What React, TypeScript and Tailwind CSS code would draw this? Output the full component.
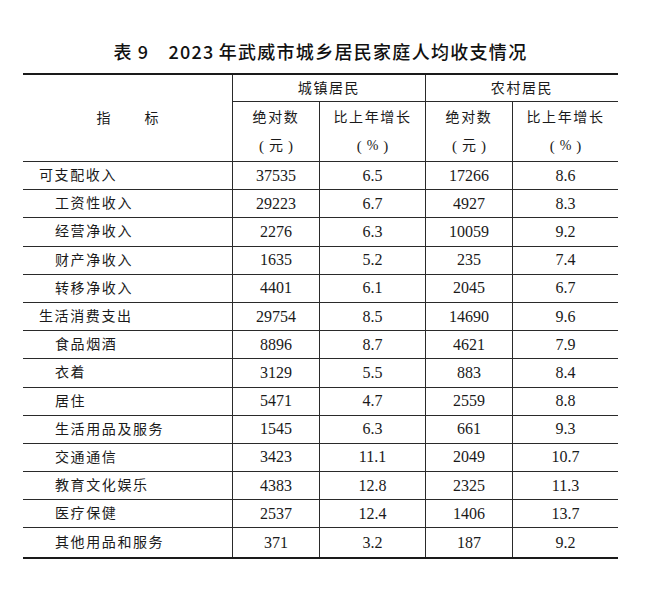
import React from "react";

type Row = { label: string; v: string[]; sub: boolean };

const rows: Row[] = [
  { label: "可支配收入", v: ["37535", "6.5", "17266", "8.6"], sub: false },
  { label: "工资性收入", v: ["29223", "6.7", "4927", "8.3"], sub: true },
  { label: "经营净收入", v: ["2276", "6.3", "10059", "9.2"], sub: true },
  { label: "财产净收入", v: ["1635", "5.2", "235", "7.4"], sub: true },
  { label: "转移净收入", v: ["4401", "6.1", "2045", "6.7"], sub: true },
  { label: "生活消费支出", v: ["29754", "8.5", "14690", "9.6"], sub: false },
  { label: "食品烟酒", v: ["8896", "8.7", "4621", "7.9"], sub: true },
  { label: "衣着", v: ["3129", "5.5", "883", "8.4"], sub: true },
  { label: "居住", v: ["5471", "4.7", "2559", "8.8"], sub: true },
  { label: "生活用品及服务", v: ["1545", "6.3", "661", "9.3"], sub: true },
  { label: "交通通信", v: ["3423", "11.1", "2049", "10.7"], sub: true },
  { label: "教育文化娱乐", v: ["4383", "12.8", "2325", "11.3"], sub: true },
  { label: "医疗保健", v: ["2537", "12.4", "1406", "13.7"], sub: true },
  { label: "其他用品和服务", v: ["371", "3.2", "187", "9.2"], sub: true },
];

const serif = "font-['Liberation_Serif','Noto_Sans_CJK_SC',serif]";

function Unit({ u }: { u: string }) {
  return (
    <span className="flex items-center gap-[5px] tracking-normal">
      <span className="text-[15px]">(</span>
      <span>{u}</span>
      <span className="text-[15px]">)</span>
    </span>
  );
}

export default function App() {
  return (
    <div className="w-[650px] h-[597px] bg-white text-[#1a1a1a] overflow-hidden">
      <div className="ml-[23px] w-[595px] pt-[39px]">
        <div className="flex justify-center items-center h-[24px] leading-[24px] font-['Noto_Sans_CJK_SC',sans-serif] font-medium text-[18px] tracking-[1.3px] text-[#111]">
          <span>表</span>
          <span className="ml-[5px]">9</span>
          <span className="ml-[19px]">2023</span>
          <span className="ml-[4px]">年武威市城乡居民家庭人均收支情况</span>
        </div>
        <div
          className={`mt-[10px] grid grid-cols-[209px_87px_106px_87px_106px] grid-rows-[27px_60px_repeat(14,28.2px)] border-t-2 border-b-2 border-[#1a1a1a] ${serif}`}
        >
          <div className="row-span-2 border-b border-[#2a2a2a] flex items-center justify-center gap-[34px] text-[14px]">
            <span>指</span>
            <span>标</span>
          </div>
          <div className="col-span-2 border-l border-b border-[#2a2a2a] flex items-center justify-center text-[14px] tracking-[1.6px]">
            城镇居民
          </div>
          <div className="col-span-2 border-l border-b border-[#2a2a2a] flex items-center justify-center text-[14px] tracking-[1.6px]">
            农村居民
          </div>
          {[
            ["绝对数", "元"],
            ["比上年增长", "%"],
            ["绝对数", "元"],
            ["比上年增长", "%"],
          ].map((h, i) => (
            <div
              key={i}
              className="border-l border-b border-[#2a2a2a] flex flex-col items-center justify-center text-[14px] leading-[28px] tracking-[1.6px]"
            >
              <span>{h[0]}</span>
              <Unit u={h[1]} />
            </div>
          ))}
          {rows.map((r, ri) => {
            const last = ri === rows.length - 1;
            const bb = last ? "" : "border-b";
            return (
              <React.Fragment key={ri}>
                <div
                  className={`${bb} border-[#2a2a2a] flex items-center text-[14px] tracking-[1.6px] ${
                    r.sub ? "pl-[32px]" : "pl-[16px]"
                  }`}
                >
                  {r.label}
                </div>
                {r.v.map((val, vi) => (
                  <div
                    key={vi}
                    className={`${bb} border-l border-[#2a2a2a] flex items-center justify-center text-[16px]`}
                  >
                    {val}
                  </div>
                ))}
              </React.Fragment>
            );
          })}
        </div>
      </div>
    </div>
  );
}
